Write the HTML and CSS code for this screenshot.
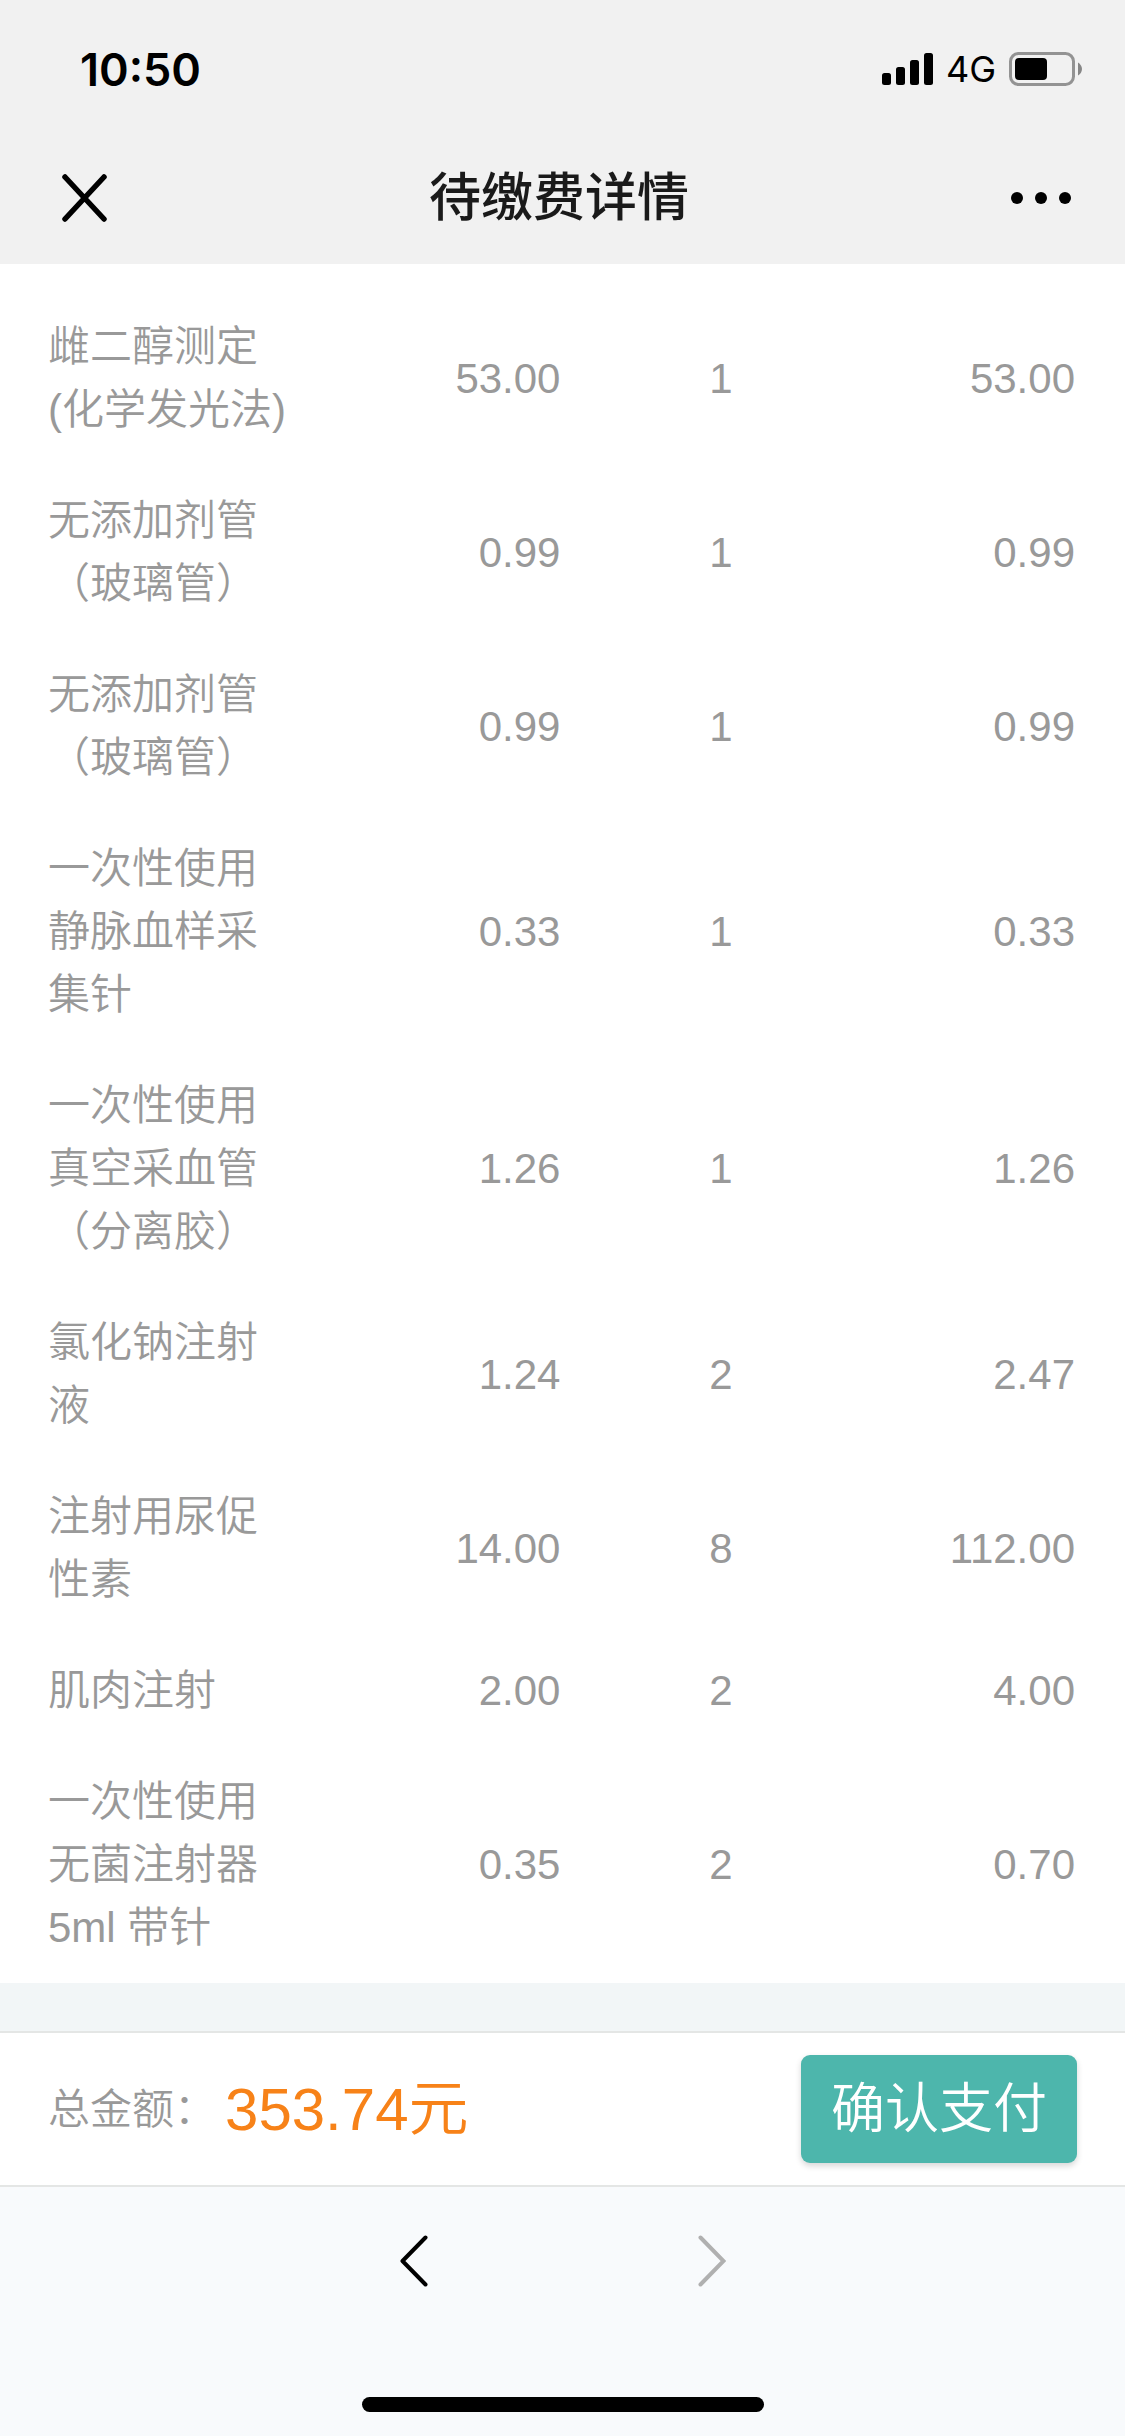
FILE: index.html
```
<!DOCTYPE html>
<html lang="zh-CN">
<head>
    <meta charset="utf-8">
    <meta name="viewport" content="width=device-width, initial-scale=1, viewport-fit=cover">
    <title>待缴费详情</title>
    <link rel="stylesheet" href="styles.css">
</head>
<body>
    <header class="top">
        <div class="status-bar">
            <span class="status-time">10:50</span>
            <div class="status-icons">
                <svg class="icon-signal" width="51" height="32" viewBox="0 0 51 32">
                    <rect x="0" y="20" width="9" height="12" rx="2.5"/>
                    <rect x="14" y="14" width="9" height="18" rx="2.5"/>
                    <rect x="28" y="7" width="9" height="25" rx="2.5"/>
                    <rect x="42" y="0" width="9" height="32" rx="2.5"/>
                </svg>
                <span class="status-network">4G</span>
                <svg class="icon-battery" width="73" height="34" viewBox="0 0 73 34">
                    <rect x="1.5" y="1.5" width="63" height="31" rx="8" fill="none" stroke="#939393" stroke-width="3"/>
                    <rect x="6" y="6" width="32" height="22" rx="4"/>
                    <path d="M69 10.500C71.500 12 73 14.500 73 17s-1.500 5-4 6.500z" fill="#868686"/>
                </svg>
            </div>
        </div>
        <div class="nav-bar">
            <button class="icon-button" type="button" aria-label="关闭">
                <svg width="45" height="48" viewBox="0 0 45 48">
                    <path d="M3 3L42 45M42 3L3 45" fill="none" stroke="#000" stroke-width="5.500" stroke-linecap="round"/>
                </svg>
            </button>
            <h1 class="nav-title">待缴费详情</h1>
            <button class="icon-button" type="button" aria-label="更多">
                <svg width="60" height="12" viewBox="0 0 60 12">
                    <circle cx="6" cy="6" r="6"/>
                    <circle cx="30" cy="6" r="6"/>
                    <circle cx="54" cy="6" r="6"/>
                </svg>
            </button>
        </div>
    </header>

    <main class="bill">
        <table class="bill-table">
            <colgroup>
                <col class="col-name">
                <col class="col-price">
                <col class="col-count">
                <col class="col-total">
            </colgroup>
            <tbody>
                <tr><td>雌二醇测定(化学发光法)</td><td>53.00</td><td>1</td><td>53.00</td></tr>
                <tr><td>无添加剂管（玻璃管）</td><td>0.99</td><td>1</td><td>0.99</td></tr>
                <tr><td>无添加剂管（玻璃管）</td><td>0.99</td><td>1</td><td>0.99</td></tr>
                <tr><td>一次性使用静脉血样采集针</td><td>0.33</td><td>1</td><td>0.33</td></tr>
                <tr><td>一次性使用真空采血管（分离胶）</td><td>1.26</td><td>1</td><td>1.26</td></tr>
                <tr><td>氯化钠注射液</td><td>1.24</td><td>2</td><td>2.47</td></tr>
                <tr><td>注射用尿促性素</td><td>14.00</td><td>8</td><td>112.00</td></tr>
                <tr><td>肌肉注射</td><td>2.00</td><td>2</td><td>4.00</td></tr>
                <tr><td>一次性使用无菌注射器5ml 带针</td><td>0.35</td><td>2</td><td>0.70</td></tr>
            </tbody>
        </table>
    </main>

    <div class="pay-bar">
        <span class="pay-label">总金额：</span>
        <span class="pay-amount">353.74元</span>
        <button class="pay-button" type="button">确认支付</button>
    </div>

    <footer class="browser-bar">
        <nav class="browser-nav">
            <button class="icon-button" type="button" aria-label="后退">
                <svg width="28" height="52" viewBox="0 0 28 52">
                    <path d="M25.500 2.500L2.500 26L25.500 49.500" fill="none" stroke="#000" stroke-width="4" stroke-linecap="round" stroke-linejoin="round"/>
                </svg>
            </button>
            <button class="icon-button" type="button" aria-label="前进" disabled>
                <svg width="28" height="52" viewBox="0 0 28 52">
                    <path d="M2.500 2.500L25.500 26L2.500 49.500" fill="none" stroke="#b0b0b0" stroke-width="4" stroke-linecap="round"/>
                </svg>
            </button>
        </nav>
        <div class="home-indicator"></div>
    </footer>
</body>
</html>
```

FILE: styles.css
```
:root {
    --font-base: "Liberation Sans", "Noto Sans CJK SC", sans-serif;
    --font-system: Inter, "Noto Sans CJK SC", sans-serif;
    --color-text: #999999;
    --color-amount: #f78218;
    --color-primary: #4db6ac;
    --color-page: #f2f6f7;
    --color-top: #f1f1f1;
    --color-browser: #f8fafc;
    --color-border: #e4e6e5;
    --space-side: 48px;
}

* {
    box-sizing: border-box;
}

body {
    display: flex;
    flex-direction: column;
    min-height: 100vh;
    margin: 0;
    background: var(--color-page);
    color: var(--color-text);
    font-family: var(--font-base);
    font-size: 42px;
    font-weight: 350;
    line-height: 63px;
}

svg {
    display: block;
}

.icon-button {
    padding: 0;
    border: 0;
    background: none;
}

/* status bar + title */
.top {
    background: var(--color-top);
    color: #000;
}

.status-bar {
    display: flex;
    align-items: center;
    justify-content: space-between;
    height: 138px;
    padding: 0 43px 0 80px;
    font-family: var(--font-system);
}

.status-time {
    font-size: 45px;
    font-weight: 600;
}

.status-icons {
    display: flex;
    align-items: center;
    gap: 13px;
}

.status-network {
    font-size: 36px;
    font-weight: 400;
}

.nav-bar {
    display: flex;
    align-items: center;
    justify-content: space-between;
    height: 126px;
    padding: 0 54px 6px 62px;
}

.nav-title {
    margin: 0;
    color: #1a1a1a;
    font-size: 52px;
    font-weight: 500;
}

/* charge list */
.bill {
    margin-bottom: 48px;
    padding: 27px var(--space-side) 0;
    background: #fff;
}

.bill-table {
    width: 100%;
    table-layout: fixed;
    border-collapse: collapse;
}

.col-name { width: 24%; }
.col-price { width: 26%; }
.col-count { width: 31%; }
.col-total { width: 19%; }

.bill-table td {
    padding: 24px 2px 24px 0;
    text-align: right;
    vertical-align: middle;
}

.bill-table td:first-child {
    text-align: left;
}

.bill-table td:nth-child(3) {
    text-align: center;
}

/* total and pay button */
.pay-bar {
    display: flex;
    align-items: center;
    padding: 22px var(--space-side);
    border-top: 2px solid var(--color-border);
    border-bottom: 2px solid var(--color-border);
    background: #fff;
}

.pay-amount {
    margin-left: 9px;
    color: var(--color-amount);
    font-size: 60px;
}

.pay-button {
    height: 108px;
    margin-left: auto;
    padding: 0 30px;
    border: 0;
    border-radius: 9px;
    background: var(--color-primary);
    box-shadow: 0 3px 6px rgba(0, 0, 0, 0.16);
    color: #fff;
    font: inherit;
    font-size: 54px;
}

/* browser toolbar */
.browser-bar {
    flex: 1;
    background: var(--color-browser);
}

.browser-nav {
    display: flex;
    align-items: center;
    justify-content: center;
    gap: 270px;
    height: 147px;
}

.home-indicator {
    width: 402px;
    max-width: 50%;
    height: 15px;
    margin: 63px auto 24px;
    border-radius: 8px;
    background: #000;
}
```
